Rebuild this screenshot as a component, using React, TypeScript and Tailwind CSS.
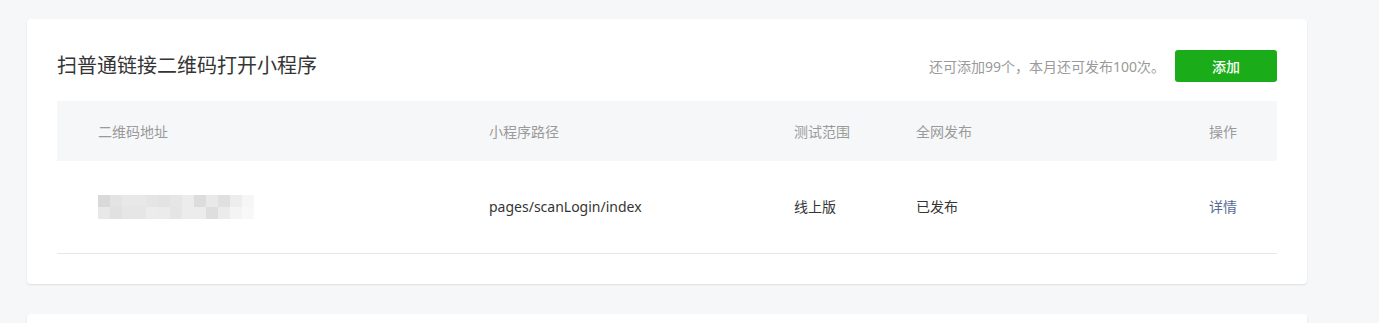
import React from 'react';

const mosaic = [
  ['#d9d9d9', '#e3e3e3', '#e8e8e8', '#e8e8e8', '#e5e5e5', '#e3e3e3', '#e6e6e6', '#ececec', '#dcdcdc', '#e9e9e9', '#e0e0e0', '#ededed', '#f6f6f6'],
  ['#e8e8e8', '#e1e1e1', '#e6e6e6', '#e6e6e6', '#ececec', '#ebebeb', '#e5e5e5', '#ececec', '#ececec', '#dedede', '#ebebeb', '#f4f4f4', '#f8f8f8'],
];

const QrMosaic = () => (
  <div className="flex flex-col">
    {mosaic.map((row, i) => (
      <div key={i} className="flex">
        {row.map((c, j) => (
          <div key={j} className="w-[12px] h-[12px]" style={{ backgroundColor: c }} />
        ))}
      </div>
    ))}
  </div>
);

const App = () => {
  return (
    <div
      className="min-h-screen bg-[#f6f7f9] pt-[19px] pl-[27px]"
      style={{ fontFamily: '"Noto Sans", "Noto Sans CJK SC", sans-serif' }}
    >
      {/* Card */}
      <div className="w-[1280px] bg-white rounded-[4px] shadow-[0_1px_2px_rgba(0,0,0,0.1)] px-[30px] pt-[31px] pb-[30px]">
        <div className="flex items-center justify-between h-[32px] mb-[19px]">
          <h2 className="text-[20px] text-[#353535] font-normal leading-none">扫普通链接二维码打开小程序</h2>
          <div className="flex items-center">
            <span className="text-[14px] text-[#9a9a9a] mr-[10px]">还可添加99个，本月还可发布100次。</span>
            <button className="w-[102px] h-[32px] rounded-[3px] bg-[#1aad19] text-white text-[14px] font-medium">
              添加
            </button>
          </div>
        </div>

        {/* Table */}
        <div className="text-[14px]">
          <div className="grid grid-cols-[432px_305px_122px_293px_68px] h-[60px] items-center bg-[#f6f7f9] text-[#9a9a9a]">
            <div className="pl-[41px]">二维码地址</div>
            <div>小程序路径</div>
            <div>测试范围</div>
            <div>全网发布</div>
            <div>操作</div>
          </div>
          <div className="grid grid-cols-[432px_305px_122px_293px_68px] h-[93px] pb-px items-center border-b border-[#e7e7e7] text-[#353535]">
            <div className="pl-[41px]">
              <QrMosaic />
            </div>
            <div>pages/scanLogin/index</div>
            <div>线上版</div>
            <div>已发布</div>
            <div className="text-[#576b95]">详情</div>
          </div>
        </div>
      </div>

      {/* Next card */}
      <div className="w-[1280px] h-[200px] bg-white rounded-[4px] shadow-[0_1px_2px_rgba(0,0,0,0.1)] mt-[30px]" />
    </div>
  );
};

export default App;
